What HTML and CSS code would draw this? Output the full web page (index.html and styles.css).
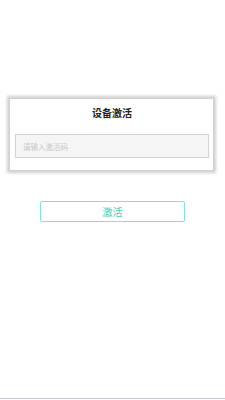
FILE: index.html
```html
<!DOCTYPE html>
<html lang="zh">
<head>
<meta charset="utf-8">
<link rel="stylesheet" href="styles.css">
</head>
<body>
<div class="page">
  <div class="card">
    <div class="title">设备激活</div>
    <input class="code" type="text" placeholder="请输入激活码">
  </div>
  <button class="activate">激活</button>
  <div class="bottom-line"></div>
</div>
</body>
</html>
```
FILE: styles.css
```css
html, body {
  margin: 0;
  padding: 0;
  background: #ffffff;
  font-family: "Noto Sans CJK SC", "Noto Sans", sans-serif;
}
.page {
  height: 400px;
  display: flex;
  flex-direction: column;
  box-sizing: border-box;
}
.card {
  margin: 99px 12px 0 10px;
  height: 71px;
  background: #ffffff;
  box-shadow: 0 0 3px 3px #cfcfcf;
  box-sizing: border-box;
  padding: 7px 4px 0 5px;
  display: flex;
  flex-direction: column;
}
.title {
  text-align: center;
  font-size: 10px;
  font-weight: bold;
  color: #222;
  line-height: 14px;
}
.code {
  margin-top: 14px;
  height: 24px;
  box-sizing: border-box;
  border: 1px solid #d4d4d4;
  background: #f5f5f5;
  padding: 0 7px;
  font-size: 7.5px;
  font-family: inherit;
  color: #333;
  outline: none;
}
.code::placeholder {
  color: #c8c8c8;
}
.activate {
  margin: 31px 0 0 40px;
  width: 145px;
  height: 21px;
  box-sizing: border-box;
  border: 1px solid #7fe3d2;
  border-radius: 2px;
  background: #ffffff;
  color: #3dcdb7;
  font-size: 10px;
  font-family: inherit;
  padding: 0;
}
.bottom-line {
  margin-top: auto;
  margin-bottom: 1px;
  height: 1px;
  background: #c9c5dd;
}
```
